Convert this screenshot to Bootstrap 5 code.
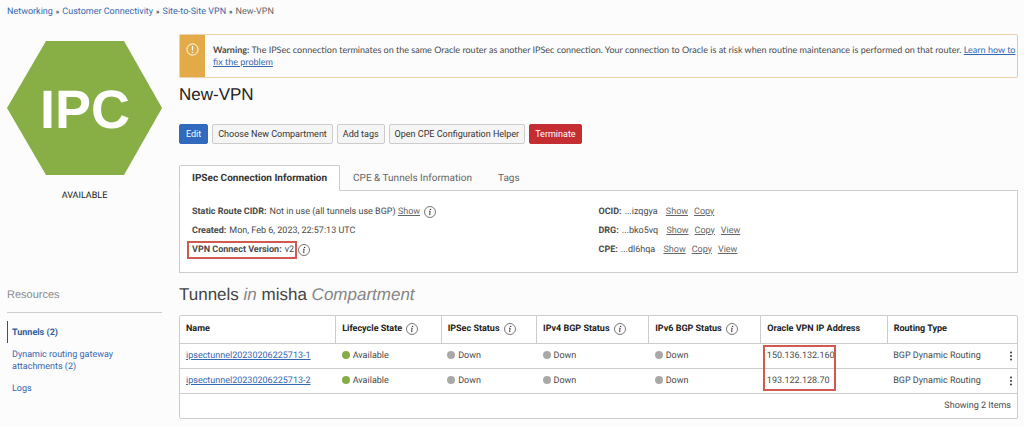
<!DOCTYPE html>
<html lang="en">
<head>
<meta charset="utf-8">
<meta name="viewport" content="width=device-width, initial-scale=1">
<title>New-VPN</title>
<link href="https://cdn.jsdelivr.net/npm/bootstrap@5.3.0/dist/css/bootstrap.min.css" rel="stylesheet">
<style>
body { font: 9px/12px Roboto, "Liberation Sans", Arial, sans-serif; color: #4a4a4a; background: #fcfcfc; text-rendering: geometricPrecision; }
b, dt, th { font-weight: 700; }
a { color: #3568b0; }
.page { padding: 6px 6px 8px 7px; }
.crumbs { line-height: 12px; color: #666; }
.crumbs a { text-decoration: none; }
.crumbs .sep { color: #222; font-size: 7px; font-weight: 700; padding: 0 3px; }
.layout { gap: 17px; margin-top: 16px; }
.side { flex: 0 0 155px; }
.hexagon { display: block; width: 155px; height: 134px; margin-top: 7px; }
.hexagon, h1, h2, .res-title { font-family: "Liberation Sans", Arial, sans-serif; }
.state { margin-top: 15px; line-height: 12px; color: #222; }
.res-title { font-size: 11px; line-height: 14px; font-weight: 400; color: #8a8a8a; margin: 86px 0 0; padding-bottom: 10px; border-bottom: 1px solid #ccc; }
.res-nav { margin-top: 8px; }
.res-nav .nav-link { padding: 6px 40px 4px 5px; color: #3568b0; }
.res-nav .nav-link.active { padding-left: 4px; border-left: 1px solid #2c5587; font-weight: 700; color: #2f5c9a; }
.notice { border: 1px solid #e9d3aa; border-radius: 2px; border-right-color: #ccc; min-height: 44px; }
.notice-icon { flex: 0 0 25px; background: #e2ab48; padding-top: 8px; }
.notice-text { padding: 9px 0 9px 8px; font-family: Lato, "Liberation Sans", sans-serif; }
h1, h2 { font-size: 17px; line-height: 20px; font-weight: 400; }
h1 { color: #222; margin: 7px 0 19px; }
h2 { color: #444; margin: 12px 0 10px; }
h2 em { color: #858585; }
.actions { gap: 4px; }
.actions .btn { font-size: 9px; line-height: 12px; padding: 3px 5px; border-radius: 2px; color: #333; background: #f5f5f5; border-color: #ccc; }
.actions .btn.go { color: #fff; background: #3069bd; border-color: #3069bd; padding: 3px 6px; }
.actions .btn.stop { color: #fff; background: #c42d32; border-color: #c42d32; }
.info-tabs { margin-top: 21px; border-bottom: 1px solid #ccc; }
.info-tabs .nav-link { font-size: 10px; line-height: 13px; padding: 6px 12px 5px; color: #666; border-radius: 2px 2px 0 0; }
.info-tabs .nav-link.active { font-weight: 700; color: #333; background: #fff; border-color: #ccc #ccc #fff; }
.info { background: #fff; border: 1px solid #ccc; border-top: 0; padding: 11px 12px 13px; }
.info dl { flex: 1 1 50%; margin: 0; }
.line { height: 19px; display: flex; align-items: center; }
.line dt, .line dd { margin: 0; }
.line dd { margin-left: 3px; white-space: nowrap; }
.line a { color: #666; }
.refs a { margin-left: 6px; }
.marked { border: 2px solid #d05a50; padding: 1px 1px 1px 3px; margin-left: -5px; }
.inf { width: 12px; height: 12px; flex: none; margin-left: 4px; }
.marked + .inf { margin-left: 1px; }
.grid { border: 1px solid #ccc; background: #fff; border-radius: 2px; }
.grid table { margin: 0; table-layout: fixed; color: #4a4a4a; }
.grid th, .grid td { padding: 6px; height: 25px; vertical-align: middle; white-space: nowrap; border-color: #ccc; }
.grid th { height: 27px; color: #222; border-right: 1px solid #ccc; }
.grid th:last-child { border-right: 0; }
.grid th span { display: flex; align-items: center; }
.grid tbody td:last-child { padding-right: 4px; }
.grid tfoot td { border-bottom: 0; }
.dot { display: inline-block; width: 8px; height: 8px; border-radius: 50%; background: #a9a9a9; vertical-align: -1px; margin-right: 3px; }
.dot.on { background: #86ad45; }
.frame { position: absolute; left: 2px; top: 1px; width: 73px; height: 46px; border: 2px solid #d05a50; pointer-events: none; }
.more { border: 0; background: none; padding: 0; width: 4px; height: 12px; display: block; }
.more svg { display: block; }
.c1 { width: 18.6%; } .c2 { width: 12.6%; } .c3 { width: 11.4%; } .c4, .c5 { width: 13.4%; } .c6 { width: 15.1%; }
</style>
</head>
<body>
<svg width="0" height="0" class="position-absolute" aria-hidden="true">
  <symbol id="info" viewBox="0 0 12 12"><circle cx="6" cy="6" r="5.5" fill="#fff" stroke="#555" stroke-width=".8"/><circle cx="6.6" cy="3.4" r=".7" fill="#333"/><path d="M5 5.2h1.2L5.5 8.6q0 .5.9 0" fill="none" stroke="#333" stroke-width=".9"/></symbol>
  <symbol id="dots" viewBox="0 0 4 12"><circle cx="2" cy="2.5" r="1" fill="#333"/><circle cx="2" cy="6" r="1" fill="#333"/><circle cx="2" cy="9.5" r="1" fill="#333"/></symbol>
</svg>
<div class="page">
  <nav class="crumbs d-flex" aria-label="Breadcrumb"><a href="#">Networking</a><span class="sep">»</span><a href="#">Customer Connectivity</a><span class="sep">»</span><a href="#">Site-to-Site VPN</a><span class="sep">»</span><span>New-VPN</span></nav>
  <div class="layout d-flex">
    <aside class="side">
      <svg class="hexagon" viewBox="0 0 155 134" role="img" aria-label="IPC"><path d="M39 0h78l38 67-38 67H39L0 67z" fill="#88ae46"/><text x="78" y="87" text-anchor="middle" font-size="54" font-weight="700" fill="#fff">IPC</text></svg>
      <div class="state text-center">AVAILABLE</div>
      <h3 class="res-title">Resources</h3>
      <nav class="res-nav nav flex-column">
        <a class="nav-link active" href="#">Tunnels (2)</a>
        <a class="nav-link" href="#">Dynamic routing gateway attachments (2)</a>
        <a class="nav-link" href="#">Logs</a>
      </nav>
    </aside>
    <main class="flex-grow-1">
      <div class="notice d-flex" role="alert">
        <div class="notice-icon text-center"><svg width="13" height="13" viewBox="0 0 13 13"><circle cx="6.5" cy="6.5" r="5.6" fill="none" stroke="#fff"/><path d="M6.5 3v4.5M6.5 8.7v1.3" stroke="#fff" stroke-width="1.2"/></svg></div>
        <div class="notice-text"><b>Warning:</b> The IPSec connection terminates on the same Oracle router as another IPSec connection. Your connection to Oracle is at risk when routine maintenance is performed on that router. <a href="#">Learn how to fix the problem</a></div>
      </div>
      <h1>New-VPN</h1>
      <div class="actions d-flex flex-wrap">
        <button type="button" class="btn go">Edit</button>
        <button type="button" class="btn">Choose New Compartment</button>
        <button type="button" class="btn">Add tags</button>
        <button type="button" class="btn">Open CPE Configuration Helper</button>
        <button type="button" class="btn stop">Terminate</button>
      </div>
      <ul class="info-tabs nav nav-tabs">
        <li class="nav-item"><a class="nav-link active" href="#">IPSec Connection Information</a></li>
        <li class="nav-item"><a class="nav-link" href="#">CPE &amp; Tunnels Information</a></li>
        <li class="nav-item"><a class="nav-link" href="#">Tags</a></li>
      </ul>
      <section class="info d-flex">
        <dl>
          <div class="line"><dt>Static Route CIDR:</dt><dd>Not in use (all tunnels use BGP) <a href="#">Show</a></dd><svg class="inf"><use href="#info"/></svg></div>
          <div class="line"><dt>Created:</dt><dd>Mon, Feb 6, 2023, 22:57:13 UTC</dd></div>
          <div class="line"><div class="marked d-flex"><dt>VPN Connect Version:</dt><dd>v2</dd></div><svg class="inf"><use href="#info"/></svg></div>
        </dl>
        <dl class="refs">
          <div class="line"><dt>OCID:</dt><dd>...izqgya <a href="#">Show</a><a href="#">Copy</a></dd></div>
          <div class="line"><dt>DRG:</dt><dd>...bko5vq <a href="#">Show</a><a href="#">Copy</a><a href="#">View</a></dd></div>
          <div class="line"><dt>CPE:</dt><dd>...dl6hqa <a href="#">Show</a><a href="#">Copy</a><a href="#">View</a></dd></div>
        </dl>
      </section>
      <h2>Tunnels <em>in</em> misha <em>Compartment</em></h2>
      <div class="grid">
        <table class="table">
          <colgroup><col class="c1"><col class="c2"><col class="c3"><col class="c4"><col class="c5"><col class="c6"><col></colgroup>
          <thead><tr>
            <th>Name</th>
            <th><span>Lifecycle State <svg class="inf"><use href="#info"/></svg></span></th>
            <th><span>IPSec Status <svg class="inf"><use href="#info"/></svg></span></th>
            <th><span>IPv4 BGP Status <svg class="inf"><use href="#info"/></svg></span></th>
            <th><span>IPv6 BGP Status <svg class="inf"><use href="#info"/></svg></span></th>
            <th>Oracle VPN IP Address</th>
            <th>Routing Type</th>
          </tr></thead>
          <tbody>
            <tr><td><a href="#">ipsectunnel20230206225713-1</a></td><td><i class="dot on"></i>Available</td><td><i class="dot"></i>Down</td><td><i class="dot"></i>Down</td><td><i class="dot"></i>Down</td><td class="position-relative">150.136.132.160<div class="frame"></div></td><td><div class="d-flex justify-content-between">BGP Dynamic Routing<button type="button" class="more" aria-label="Actions"><svg width="4" height="12"><use href="#dots"/></svg></button></div></td></tr>
            <tr><td><a href="#">ipsectunnel20230206225713-2</a></td><td><i class="dot on"></i>Available</td><td><i class="dot"></i>Down</td><td><i class="dot"></i>Down</td><td><i class="dot"></i>Down</td><td>193.122.128.70</td><td><div class="d-flex justify-content-between">BGP Dynamic Routing<button type="button" class="more" aria-label="Actions"><svg width="4" height="12"><use href="#dots"/></svg></button></div></td></tr>
          </tbody>
          <tfoot><tr><td colspan="7" class="text-end">Showing 2 Items</td></tr></tfoot>
        </table>
      </div>
    </main>
  </div>
</div>
<script src="https://cdn.jsdelivr.net/npm/bootstrap@5.3.0/dist/js/bootstrap.bundle.min.js"></script>
</body>
</html>
